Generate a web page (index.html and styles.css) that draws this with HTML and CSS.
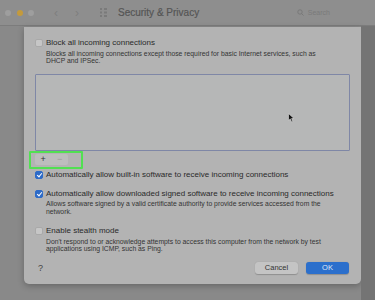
FILE: index.html
```html
<!DOCTYPE html>
<html>
<head>
    <title>Security &amp; Privacy</title>
    <link rel="stylesheet" href="styles.css">
</head>
<body>
    <div class="titlebar">
        <div class="lights">
            <span class="light"></span>
            <span class="light orange"></span>
            <span class="light"></span>
        </div>
        <div class="nav">&#8249;</div>
        <div class="nav">&#8250;</div>
        <div class="grid-icon">
            <svg width="7" height="9" viewBox="0 0 7 9"><g fill="#7a7a7a"><rect x="0" y="0" width="2" height="2"/><rect x="4" y="0" width="3" height="2"/><rect x="0" y="3.5" width="2" height="2"/><rect x="4" y="3.5" width="3" height="2"/><rect x="0" y="7" width="2" height="2"/><rect x="4" y="7" width="3" height="2"/></g></svg>
        </div>
        <div class="title">Security &amp; Privacy</div>
        <div class="search">
            <svg width="7" height="7" viewBox="0 0 7 7"><circle cx="3" cy="3" r="2.2" fill="none" stroke="#777" stroke-width="0.9"/><path d="M4.6 4.6 L6.6 6.6" stroke="#777" stroke-width="0.9"/></svg>
            <span>Search</span>
        </div>
    </div>

    <div class="main">
        <div class="sheet">
            <div class="option">
                <span class="check"></span>
                <div>
                    <div class="label">Block all incoming connections</div>
                    <div class="desc narrow">Blocks all incoming connections except those required for basic Internet services, such as DHCP and IPSec.</div>
                </div>
            </div>

            <div class="app-list">
                <svg class="cursor" width="7" height="10" viewBox="0 0 7 10"><path d="M0.5 0.5 L0.5 7.5 L2.3 5.9 L3.6 8.9 L4.8 8.4 L3.6 5.5 L6 5.5 Z" fill="#111" stroke="#ddd" stroke-width="0.6"/></svg>
            </div>

            <div class="highlight">
                <div class="seg">
                    <span class="seg-btn">+</span>
                    <span class="seg-btn dim">&minus;</span>
                </div>
            </div>

            <div class="option builtin">
                <span class="check on"></span>
                <div class="label">Automatically allow built-in software to receive incoming connections</div>
            </div>

            <div class="option signed">
                <span class="check on"></span>
                <div>
                    <div class="label">Automatically allow downloaded signed software to receive incoming connections</div>
                    <div class="desc">Allows software signed by a valid certificate authority to provide services accessed from the network.</div>
                </div>
            </div>

            <div class="option stealth">
                <span class="check"></span>
                <div>
                    <div class="label">Enable stealth mode</div>
                    <div class="desc">Don't respond to or acknowledge attempts to access this computer from the network by test applications using ICMP, such as Ping.</div>
                </div>
            </div>

            <div class="footer">
                <span class="help">?</span>
                <div class="buttons">
                    <button class="btn">Cancel</button>
                    <button class="btn primary">OK</button>
                </div>
            </div>
        </div>
        <div class="side"></div>
    </div>
</body>
</html>
```

FILE: styles.css
```css
body {
    margin: 0;
    width: 375px;
    height: 300px;
    overflow: hidden;
    background-color: #898989;
    font-family: "Liberation Sans", Arial, sans-serif;
    color: #2e2e2e;
}

.titlebar {
    height: 26px;
    background-color: #8e8e8e;
    border-bottom: 1px solid #7c7c7c;
    display: flex;
    align-items: center;
    box-sizing: border-box;
}

.lights {
    display: flex;
    gap: 5.5px;
    margin-left: 5px;
}

.light {
    width: 6px;
    height: 6px;
    border-radius: 50%;
    background-color: #9e9e9e;
}

.light.orange {
    background-color: #c49a3c;
}

.nav {
    color: #7e7e7e;
    font-size: 12px;
    width: 20px;
    margin-left: 12px;
    text-align: center;
}

.nav + .nav {
    margin-left: 1px;
}

.grid-icon {
    margin-left: 13px;
    display: flex;
}

.title {
    margin-left: 11px;
    font-size: 10px;
    color: #555;
    -webkit-text-stroke: 0.2px #555;
}

.search {
    margin-left: auto;
    margin-right: 45px;
    display: flex;
    align-items: center;
    gap: 4px;
    font-size: 7px;
    color: #7a7a7a;
}

.main {
    display: flex;
    height: 274px;
}

.sheet {
    width: 337px;
    height: 257px;
    margin-left: 24px;
    margin-top: 1px;
    background-color: #b3b3b3;
    border-radius: 0 0 5px 5px;
    box-shadow: 0 2px 6px rgba(0, 0, 0, 0.25);
    padding: 11px 11px 0 11px;
    box-sizing: border-box;
    display: flex;
    flex-direction: column;
}

.side {
    flex: 1;
    background-color: #747474;
}

.option {
    display: flex;
    align-items: flex-start;
    gap: 3px;
}

.check {
    flex: none;
    width: 8px;
    height: 8px;
    margin-top: 1px;
    border-radius: 2px;
    background-color: #c6c6c6;
    border: 1px solid #a9a9a9;
    box-sizing: border-box;
    position: relative;
}

.check.on {
    background-color: #2d6bc8;
    border-color: #2d6bc8;
}

.check.on::after {
    content: "";
    position: absolute;
    left: 2px;
    top: 0px;
    width: 2px;
    height: 4px;
    border: solid #fff;
    border-width: 0 1px 1px 0;
    transform: rotate(40deg);
}

.label {
    font-size: 8px;
    line-height: 10px;
    color: #2a2a2a;
}

.desc {
    font-size: 6.8px;
    line-height: 7.5px;
    color: #333;
    margin-top: 1.5px;
    max-width: 292px;
}

.desc.narrow {
    max-width: 282px;
}

.app-list {
    position: relative;
    margin-top: 9px;
    height: 77px;
    width: 315px;
    box-sizing: border-box;
    border: 1px solid #7f87a6;
    border-radius: 1px;
    background-color: #b6b7b7;
}

/* mouse pointer captured in the screenshot */
.cursor {
    position: absolute;
    left: 252px;
    top: 38px;
}

.highlight {
    margin-top: 0;
    margin-left: -6px;
    width: 54px;
    height: 18px;
    box-sizing: border-box;
    border: 2px solid #52e052;
    border-radius: 1px;
    padding: 1px 0 0 4px;
}

.seg {
    display: flex;
    width: 33px;
    height: 11px;
    background-color: #bdbdbd;
    border-radius: 2px;
}

.seg-btn {
    flex: 1;
    text-align: center;
    font-size: 9px;
    line-height: 11px;
    color: #333;
}

.seg-btn.dim {
    color: #9a9a9a;
}

.option.builtin {
    margin-top: 1px;
}

.option.signed {
    margin-top: 9px;
}

.option.stealth {
    margin-top: 11px;
}

.footer {
    margin-top: 9px;
    display: flex;
    align-items: center;
    justify-content: space-between;
}

.help {
    margin-left: 3px;
    font-size: 9px;
    color: #444;
}

.buttons {
    display: flex;
    gap: 8px;
    margin-right: 1px;
}

.btn {
    font-family: "Liberation Sans", Arial, sans-serif;
    font-size: 7.5px;
    height: 12px;
    width: 43px;
    padding: 0;
    border: none;
    border-radius: 3px;
    background-color: #c4c4c4;
    color: #333;
    box-shadow: 0 0.5px 1px rgba(0, 0, 0, 0.2);
}

.btn.primary {
    background-color: #2b6fcc;
    color: #dfe8f7;
}
```
